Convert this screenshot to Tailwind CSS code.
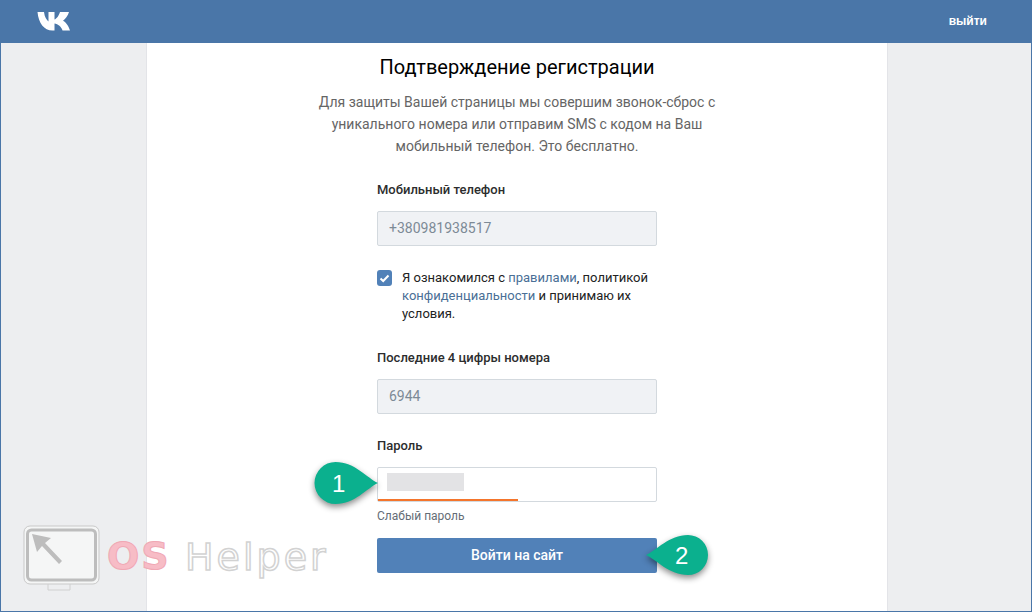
<!DOCTYPE html>
<html lang="ru">
<head>
  <meta charset="UTF-8">
  <title>Подтверждение регистрации</title>
  <script src="https://cdn.jsdelivr.net/npm/@tailwindcss/browser@4"></script>
</head>
<body class="font-['Roboto',sans-serif]">
<div class="relative w-[1032px] h-[612px] overflow-hidden bg-[#edeef0] border-x border-b border-[#4a76a8] flex flex-col">
  <!-- header -->
  <header class="h-[43px] shrink-0 bg-[#4a76a8] flex items-center justify-between pl-[37px] pr-[45px] -mx-px">
    <svg width="33" height="20" viewBox="0 0 33 20" class="-mt-[1px]"><path fill="#fff" d="M0.5 1H7C7.6 6 9.5 9 11.5 10.5V1H17.5V8.5C19.5 8 22 4.5 23 1H32C31 5 28 8 26 9.8C28.5 11 31.5 14.5 33 19.5H25.5C24.5 16 21 13 17.5 12.6V19.5H15.5C7 19.5 1.5 12 0.5 1Z"/></svg>
    <span class="text-[12px] font-bold text-white lowercase font-['Liberation_Sans',sans-serif] -mt-[1px]">выйти</span>
  </header>

  <!-- content column -->
  <main class="w-[742px] flex-1 ml-[145px] bg-white border-x border-[#e3e4e8] flex flex-col items-center">
    <h1 class="mt-[11px] text-[20px] leading-[26px] text-black">Подтверждение регистрации</h1>
    <p class="mt-[11px] w-[420px] text-center text-[14px] leading-[22px] text-[#656565]">Для защиты Вашей страницы мы совершим звонок-сброс с уникального номера или отправим SMS с кодом на Ваш мобильный телефон. Это бесплатно.</p>

    <form class="w-[280px] mt-[24px] flex flex-col">
      <label class="text-[13px] leading-[18px] font-medium text-[#2c2d2e]">Мобильный телефон</label>
      <div class="mt-[12px] h-[35px] bg-[#f0f2f5] border border-[#d3d9de] rounded-[2px] px-[11px] flex items-center text-[14px] text-[#7d8a96]">+380981938517</div>

      <div class="mt-[23px] flex items-start gap-[10px]">
        <span class="mt-[1px] w-[15px] h-[16px] shrink-0 rounded-[3px] bg-[#5181b8] flex items-center justify-center">
          <svg width="11" height="9" viewBox="0 0 11 9"><path d="M1.5 4.5L4.2 7L9.5 1.5" fill="none" stroke="#fff" stroke-width="2"/></svg>
        </span>
        <p class="text-[13px] leading-[18px] text-[#222] w-[255px]">Я ознакомился с <span class="text-[#4a6f96]">правилами</span>, политикой <span class="text-[#4a6f96]">конфиденциальности</span> и принимаю их условия.</p>
      </div>

      <label class="mt-[26px] text-[13px] leading-[18px] font-medium text-[#2c2d2e]">Последние 4 цифры номера</label>
      <div class="mt-[12px] h-[35px] bg-[#f0f2f5] border border-[#d3d9de] rounded-[2px] px-[11px] flex items-center text-[14px] text-[#7d8a96]">6944</div>

      <label class="mt-[23px] text-[13px] leading-[18px] font-medium text-[#2c2d2e]">Пароль</label>
      <div class="relative mt-[12px] h-[35px] bg-white border border-[#d3d9de] rounded-[2px]">
        <div class="absolute left-[9px] top-[5px] w-[77px] h-[18px] bg-[#e3e3e5]"></div>
        <div class="absolute left-0 bottom-0 w-[140px] h-[2px] bg-[#f4752c]"></div>
      </div>
      <span class="mt-[5px] text-[12px] leading-[18px] text-[#656d76]">Слабый пароль</span>

      <button type="button" class="mt-[13px] h-[35px] rounded-[2px] bg-[#5181b8] text-white text-[14px] font-medium">Войти на сайт</button>
    </form>
  </main>

  <!-- callouts -->
  <svg class="absolute left-[300px] top-[450px] drop-shadow-[0_3px_3px_rgba(0,0,0,0.45)]" width="90" height="70" viewBox="0 0 90 70">
    <path fill="#0bb08e" d="M77 33C66 28 54 12 34.5 12A21 21 0 0 0 34.5 54C54 54 66 38 77 33Z"/>
  </svg>
  <span class="absolute left-[331px] top-[470px] text-[24px] leading-[28px] text-white font-['Liberation_Sans',sans-serif]">1</span>

  <svg class="absolute left-[635px] top-[525px] drop-shadow-[0_3px_3px_rgba(0,0,0,0.45)]" width="85" height="65" viewBox="0 0 85 65">
    <path fill="#0bb08e" d="M10 30C21 25 33 10 52 10A20 20 0 0 1 52 50C33 50 21 35 10 30Z"/>
  </svg>
  <span class="absolute left-[674px] top-[542px] text-[24px] leading-[28px] text-white font-['Liberation_Sans',sans-serif]">2</span>

  <!-- watermark -->
  <svg class="absolute left-[21px] top-[524px]" width="80" height="68" viewBox="0 0 80 68">
    <rect x="2" y="2" width="75" height="58" rx="6" fill="#f5f6f6" stroke="#c9c9c9" stroke-width="1"/>
    <rect x="5.5" y="6" width="68" height="50" rx="4" fill="none" stroke="#bdbdbd" stroke-width="3"/>
    <path d="M26 60V66H48V60" fill="none" stroke="#d0d0d0"/>
    <path d="M10 10L15 28L20 22L37 40L40 37L23 19L29 14Z" fill="#bdbdbd"/>
  </svg>
  <span class="absolute left-[106px] top-[532px] text-[38px] leading-[48px] font-bold tracking-[2px] text-[#f7bcc6] font-['DejaVu_Sans',sans-serif] [-webkit-text-stroke:1px_#f0a8b4]">OS</span>
  <span class="absolute left-[184px] top-[533px] text-[38px] leading-[48px] tracking-[3px] text-white font-['DejaVu_Sans',sans-serif] [-webkit-text-stroke:1.5px_#d2d2d2]">Helper</span>
</div>
</body>
</html>
